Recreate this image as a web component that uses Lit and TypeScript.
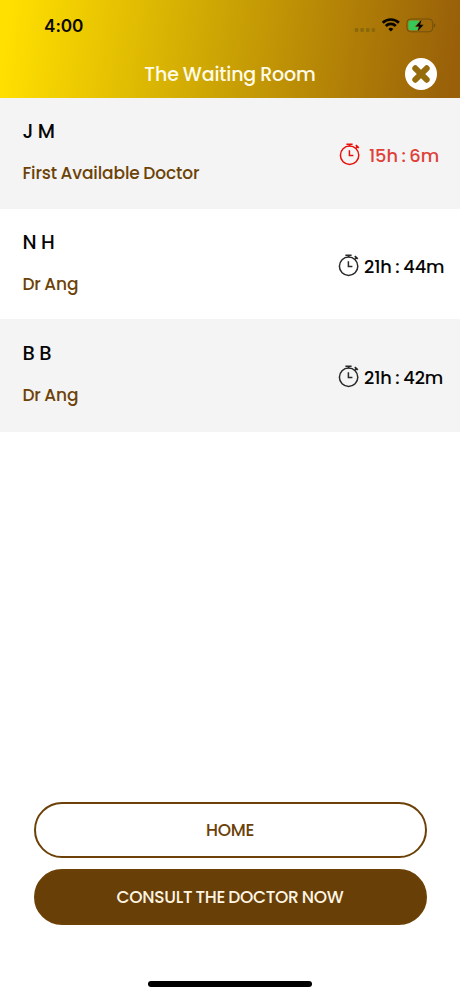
import { LitElement, html, svg, css } from "lit";
import { customElement, property } from "lit/decorators.js";
import { classMap } from "lit/directives/class-map.js";

interface Patient {
  initials: string;
  doctor: string;
  wait: string;
  key: string;
  urgent?: boolean;
}

const patients: Patient[] = [
  { initials: "J M", doctor: "First Available Doctor", wait: "15h : 6m", key: "first", urgent: true },
  { initials: "N H", doctor: "Dr Ang", wait: "21h : 44m", key: "second" },
  { initials: "B B", doctor: "Dr Ang", wait: "21h : 42m", key: "third" },
];

@customElement("stopwatch-icon")
class StopwatchIcon extends LitElement {
  static styles = css`
    :host { display: block; width: 22px; height: 24px; }
    svg { display: block; }
  `;
  render() {
    return html`<svg width="22" height="24" viewBox="0 0 22 24" fill="none" stroke="currentColor">
      ${svg`<circle cx="10.6" cy="13.2" r="9.2" stroke-width="1.5"/>
      <path d="M7.4 2.3h6.2M10.6 2.3v2" stroke-width="1.6"/>
      <path d="M10.4 8.2v5.4h4" stroke-width="1.5"/>
      <path d="M16.8 3.1l3 2.7M17 6.2l1.5-1.6" stroke-width="1.8"/>`}
    </svg>`;
  }
}

@customElement("status-bar")
class StatusBar extends LitElement {
  static styles = css`
    :host { display: flex; height: 50px; align-items: center; justify-content: space-between; padding: 0 24px 0 44px; box-sizing: border-box; }
    .clock { font: 600 17.3px/20px Inter, sans-serif; color: #0b0900; letter-spacing: -0.1px; margin-top: 1px; }
    svg { display: block; }
  `;
  render() {
    return html`
      <span class="clock">4:00</span>
      <svg width="82" height="18" viewBox="0 0 82 18">
        <g fill="#8b690b">
          <rect x="0.8" y="12" width="3.5" height="4" rx="1"/>
          <rect x="6.4" y="12" width="3.5" height="4" rx="1"/>
          <rect x="12" y="12" width="3.5" height="4" rx="1"/>
          <rect x="17.6" y="12" width="3.5" height="4" rx="1"/>
        </g>
        <g fill="none" stroke="#090600" stroke-width="2.7">
          <path d="M28.7 6.8a11.6 11.6 0 0 1 16.2 0"/>
          <path d="M31.8 10a7.1 7.1 0 0 1 10 0"/>
        </g>
        <path d="M36.8 15.6l-2.5-2.6a3.6 3.6 0 0 1 5 0z" fill="#090600"/>
        <rect x="52.9" y="3" width="25.8" height="12.8" rx="3.8" fill="none" stroke="#72500b"/>
        <path d="M79.8 7.3c2.2.8 2.2 3.4 0 4.2z" fill="#72500b"/>
        <path d="M56.4 4.5h8.8v9.8h-8.8a2 2 0 0 1-2-2v-5.8a2 2 0 0 1 2-2z" fill="#36c759"/>
        <path d="M67.6 3.7l-6 6.8h3.5l-1.5 5.1 6-6.8h-3.5z" fill="#090600" stroke="#9d7011" stroke-width="1.2" paint-order="stroke"/>
      </svg>`;
  }
}

@customElement("patient-row")
class PatientRow extends LitElement {
  @property({ attribute: false }) patient!: Patient;
  static styles = css`
    :host { display: block; }
    .row { box-sizing: border-box; display: flex; justify-content: space-between; height: 111px; padding: 20px 16px 0 22.4px; background: #f4f4f4; color: #050505; }
    .second { height: 110px; background: #fff; }
    .third { height: 113px; padding-top: 21px; }
    .who { display: flex; flex-direction: column; gap: 13px; }
    .name { font-size: 19.5px; line-height: 28px; letter-spacing: 0.2px; word-spacing: -1px; }
    .doctor { font-size: 17px; line-height: 28px; letter-spacing: -0.12px; word-spacing: -0.7px; color: #6c4207; }
    .wait { display: flex; height: 28px; align-items: center; margin-top: 24px; white-space: nowrap; }
    .time { width: 80px; margin: -2px 0 0 4px; font-size: 17.8px; letter-spacing: -0.1px; word-spacing: -0.9px; }
    .urgent .time { width: 75px; margin-left: 8.5px; color: #df4139; }
    stopwatch-icon { color: #292929; margin-top: -4px; }
    .urgent stopwatch-icon { color: #e8100c; }
  `;
  render() {
    const p = this.patient;
    return html`<section class=${classMap({ row: true, [p.key]: true, urgent: !!p.urgent })}>
      <div class="who"><span class="name">${p.initials}</span><span class="doctor">${p.doctor}</span></div>
      <div class="wait"><stopwatch-icon></stopwatch-icon><span class="time">${p.wait}</span></div>
    </section>`;
  }
}

@customElement("app-root")
class AppRoot extends LitElement {
  static styles = css`
    :host { display: flex; flex-direction: column; height: 996px; box-sizing: border-box; background: #fff; font-family: Poppins, Inter, sans-serif; font-weight: 500; }
    header { height: 98px; background: linear-gradient(97deg, #ffe000 2%, #cda504 47%, #996009 98%); }
    .bar { display: grid; grid-template-columns: 56px 1fr 56px; height: 48px; align-items: center; }
    h1 { grid-column: 2; margin: 1px 0 0; text-align: center; color: #fffbe6; font-size: 19px; letter-spacing: -0.12px; word-spacing: -0.8px; line-height: 28px; font-weight: 500; }
    .close { width: 32px; height: 32px; padding: 0; border: 0; background: none; justify-self: start; margin-left: 1px; }
    .close svg { display: block; }
    main { flex: 1; }
    footer { display: flex; flex-direction: column; gap: 11px; padding: 0 33.5px; }
    .button { box-sizing: border-box; height: 56px; border: 2px solid #6b4108; border-radius: 28px; background: #fff; color: #6b4108; font: inherit; font-size: 17px; letter-spacing: -0.32px; word-spacing: -0.8px; padding: 0; }
    .primary { background: #683f07; color: #fff5e3; }
    .home { width: 164px; height: 6px; border-radius: 3px; background: #000; margin: 56px auto 9px; }
  `;
  render() {
    return html`
      <header>
        <status-bar></status-bar>
        <div class="bar">
          <h1>The Waiting Room</h1>
          <button class="close" aria-label="Close">
            <svg width="32" height="32" viewBox="0 0 32 32">
              <circle cx="16" cy="16" r="16" fill="#fff"/>
              <path d="M10.3 10.3l11.4 11.4M21.7 10.3l-11.4 11.4" stroke="#966b0b" stroke-width="6" stroke-linecap="round"/>
            </svg>
          </button>
        </div>
      </header>
      <main>${patients.map((p) => html`<patient-row .patient=${p}></patient-row>`)}</main>
      <footer>
        <button class="button">HOME</button>
        <button class="button primary">CONSULT THE DOCTOR NOW</button>
      </footer>
      <div class="home"></div>`;
  }
}
